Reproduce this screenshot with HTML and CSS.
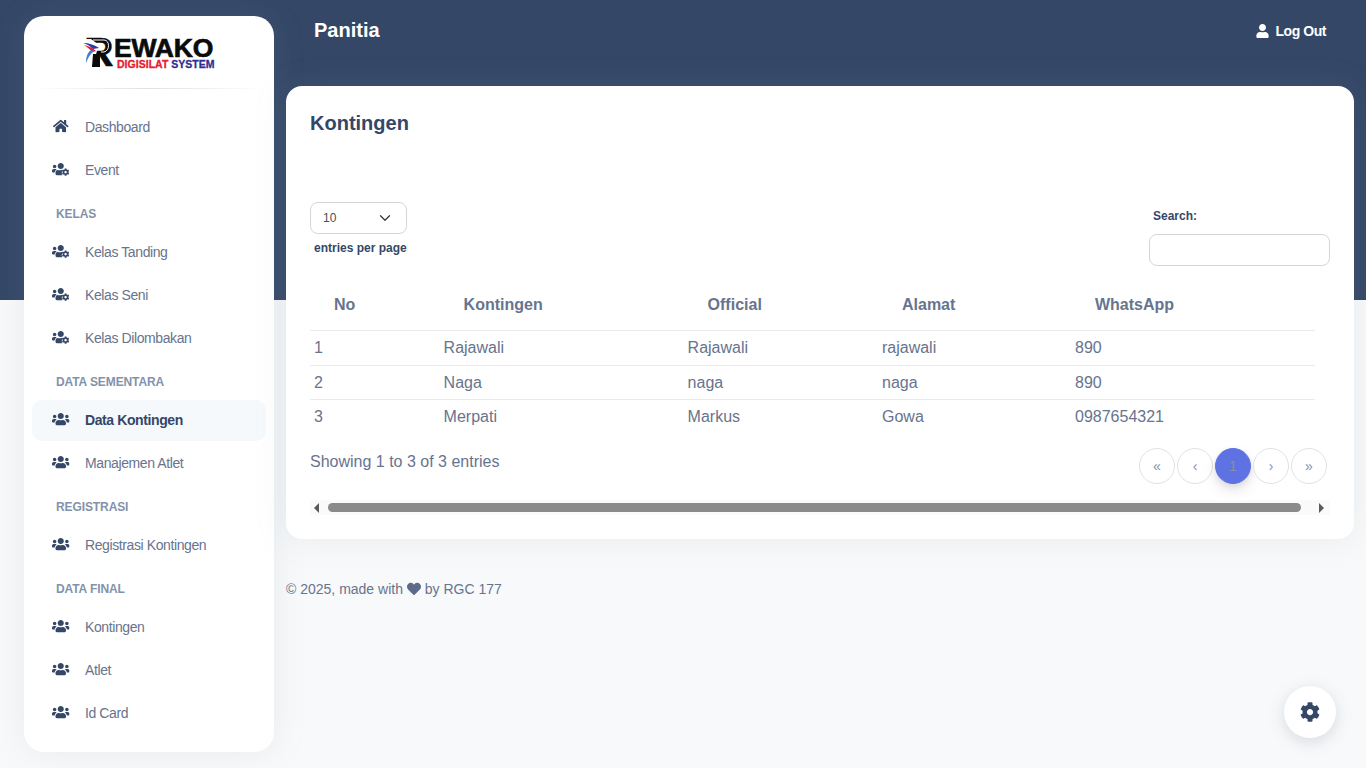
FILE: index.html
```html
<!DOCTYPE html>
<html lang="id">
<head>
<meta charset="utf-8">
<title>Kontingen</title>
<link rel="stylesheet" href="styles.css">
</head>
<body>
<svg class="defs" aria-hidden="true">
  <symbol id="i-users" viewBox="0 0 640 512"><path d="M96 224c35.300 0 64-28.700 64-64s-28.700-64-64-64-64 28.700-64 64 28.700 64 64 64zm448 0c35.300 0 64-28.700 64-64s-28.700-64-64-64-64 28.700-64 64 28.700 64 64 64zm32 32h-64c-17.600 0-33.500 7.100-45.100 18.600 40.300 22.100 68.900 62 75.100 109.400h66c17.700 0 32-14.300 32-32v-32c0-35.300-28.700-64-64-64zm-256 0c61.900 0 112-50.100 112-112S381.900 32 320 32 208 82.100 208 144s50.100 112 112 112zm76.800 32h-8.300c-20.800 10-43.900 16-68.500 16s-47.600-6-68.500-16h-8.300C179.600 288 128 339.600 128 403.200V432c0 26.500 21.500 48 48 48h288c26.500 0 48-21.500 48-48v-28.800c0-63.600-51.600-115.200-115.200-115.200zm-223.700-13.400C161.500 263.100 145.600 256 128 256H64c-35.300 0-64 28.700-64 64v32c0 17.700 14.300 32 32 32h65.900c6.300-47.400 34.900-87.300 75.200-109.400z"/></symbol>
  <symbol id="i-cog" viewBox="0 0 512 512"><path d="M487.400 315.700l-42.600-24.600c4.300-23.200 4.300-47 0-70.200l42.600-24.600c4.900-2.800 7.100-8.600 5.500-14-11.100-35.600-30-67.800-54.700-94.600-3.800-4.100-10-5.100-14.800-2.300L380.800 110c-17.900-15.400-38.500-27.300-60.800-35.100V25.800c0-5.600-3.900-10.500-9.400-11.700-36.700-8.200-74.300-7.800-109.200 0-5.500 1.200-9.400 6.100-9.400 11.700V75c-22.200 7.900-42.800 19.800-60.800 35.100L88.700 85.500c-4.900-2.800-11-1.900-14.800 2.300-24.700 26.700-43.600 58.900-54.700 94.600-1.700 5.400.6 11.200 5.500 14L67.300 221c-4.300 23.200-4.300 47 0 70.200l-42.600 24.600c-4.900 2.800-7.100 8.600-5.500 14 11.100 35.600 30 67.800 54.700 94.600 3.800 4.100 10 5.100 14.800 2.300l42.600-24.600c17.900 15.400 38.500 27.300 60.800 35.100v49.200c0 5.600 3.900 10.500 9.400 11.700 36.700 8.200 74.300 7.800 109.200 0 5.500-1.200 9.400-6.100 9.400-11.700v-49.200c22.200-7.900 42.800-19.800 60.800-35.100l42.600 24.600c4.900 2.800 11 1.900 14.800-2.300 24.700-26.700 43.600-58.900 54.700-94.600 1.500-5.500-.7-11.300-5.600-14.100zM256 336c-44.100 0-80-35.900-80-80s35.900-80 80-80 80 35.900 80 80-35.900 80-80 80z"/></symbol>
  <symbol id="i-users-cog" viewBox="0 0 640 512"><path d="M96 224c35.300 0 64-28.700 64-64s-28.700-64-64-64-64 28.700-64 64 28.700 64 64 64zm224 32c61.900 0 112-50.100 112-112S381.900 32 320 32 208 82.100 208 144s50.100 112 112 112zm-147 18.600C161.500 263.100 145.600 256 128 256H64c-35.300 0-64 28.700-64 64v32c0 17.700 14.300 32 32 32h65.900c6.300-47.400 34.900-87.300 75.200-109.400zM128 403.200V432c0 26.500 21.500 48 48 48h196c-12-18-20-50-14-92 4-30 18-58 44-84-10-10-24-16-40-16h-8c-22 10-44 16-67 16s-48-6-68-16h-8c-64 0-83 52-83 115.200z"/><path transform="translate(356 230) scale(.55)" d="M487.400 315.700l-42.600-24.600c4.300-23.200 4.300-47 0-70.200l42.600-24.600c4.900-2.800 7.100-8.600 5.500-14-11.100-35.600-30-67.800-54.700-94.600-3.800-4.100-10-5.100-14.800-2.300L380.800 110c-17.900-15.400-38.500-27.300-60.800-35.100V25.800c0-5.600-3.900-10.500-9.400-11.700-36.700-8.200-74.300-7.800-109.200 0-5.500 1.200-9.400 6.100-9.400 11.700V75c-22.200 7.900-42.800 19.800-60.800 35.100L88.700 85.500c-4.900-2.800-11-1.900-14.800 2.300-24.700 26.700-43.600 58.900-54.700 94.600-1.700 5.400.6 11.200 5.500 14L67.300 221c-4.300 23.200-4.300 47 0 70.200l-42.600 24.600c-4.900 2.800-7.100 8.600-5.500 14 11.100 35.600 30 67.800 54.700 94.600 3.800 4.100 10 5.100 14.800 2.300l42.600-24.600c17.900 15.400 38.500 27.300 60.800 35.100v49.200c0 5.600 3.900 10.500 9.400 11.700 36.700 8.200 74.300 7.800 109.200 0 5.500-1.200 9.400-6.100 9.400-11.700v-49.200c22.200-7.900 42.800-19.800 60.800-35.100l42.600 24.600c4.900 2.800 11 1.900 14.800-2.300 24.700-26.700 43.600-58.900 54.700-94.600 1.500-5.500-.7-11.300-5.600-14.100zM256 336c-44.100 0-80-35.900-80-80s35.900-80 80-80 80 35.900 80 80-35.900 80-80 80z"/></symbol>
</svg>

<aside class="sidebar">
  <div class="brand">
    <div class="logo">
      <div class="logo-mark">
        <span class="logo-r">R</span>
        <svg class="logo-swoosh" viewBox="0 0 32 30" aria-hidden="true">
          <path d="M0 2 H8 L16 8 L14 14 L9 30 H2 Z" fill="#fff"/>
          <path d="M0 6 C6 6 12 8 16 11 L10 12 C7 9 4 7 0 6 Z" fill="#2b3a9c"/>
          <path d="M1 8 C6 9 10 11 13 14 L9 15 C7 12 4 10 1 8 Z" fill="#e8202e"/>
          <path d="M8 13 L11 14 C7 17 5 21 3 26 C3 21 4 16 8 13 Z" fill="#3f7fd0"/>
          <path d="M10 17 H17 V30 H9 Z" fill="#0b0b0b"/>
          <path d="M10 3 H21 C27 3 27 14 21 15 H18" fill="none" stroke="#fff" stroke-width="1"/>
        </svg>
      </div>
      <div class="logo-text">
        <div class="logo-name">EWAKO</div>
        <div class="logo-sub"><span class="red">DIGISILAT</span> <span class="blue">SYSTEM</span></div>
      </div>
    </div>
  </div>
  <hr class="divider">
  <nav class="nav">
    <a class="item"><svg class="ico home" viewBox="0 0 576 512"><path d="M280.370 148.260L96 300.110V464a16 16 0 0 0 16 16l112.060-.29a16 16 0 0 0 15.920-16V368a16 16 0 0 1 16-16h64a16 16 0 0 1 16 16v95.640a16 16 0 0 0 16 16.050L464 480a16 16 0 0 0 16-16V300L295.670 148.260a12.190 12.190 0 0 0-15.300 0zM571.600 251.470L488 182.560V44.050a12 12 0 0 0-12-12h-56a12 12 0 0 0-12 12v72.610L318.470 43a48 48 0 0 0-61 0L4.340 251.470a12 12 0 0 0-1.600 16.900l25.500 31A12 12 0 0 0 45.150 301l235.220-193.740a12.190 12.190 0 0 1 15.300 0L530.900 301a12 12 0 0 0 16.900-1.600l25.500-31a12 12 0 0 0-1.700-16.930z"/></svg><span>Dashboard</span></a>
    <a class="item"><svg class="ico"><use href="#i-users-cog"/></svg><span>Event</span></a>
    <div class="section">KELAS</div>
    <a class="item"><svg class="ico"><use href="#i-users-cog"/></svg><span>Kelas Tanding</span></a>
    <a class="item"><svg class="ico"><use href="#i-users-cog"/></svg><span>Kelas Seni</span></a>
    <a class="item"><svg class="ico"><use href="#i-users-cog"/></svg><span>Kelas Dilombakan</span></a>
    <div class="section">DATA SEMENTARA</div>
    <a class="item active"><svg class="ico"><use href="#i-users"/></svg><span>Data Kontingen</span></a>
    <a class="item"><svg class="ico"><use href="#i-users"/></svg><span>Manajemen Atlet</span></a>
    <div class="section">REGISTRASI</div>
    <a class="item"><svg class="ico"><use href="#i-users"/></svg><span>Registrasi Kontingen</span></a>
    <div class="section">DATA FINAL</div>
    <a class="item"><svg class="ico"><use href="#i-users"/></svg><span>Kontingen</span></a>
    <a class="item"><svg class="ico"><use href="#i-users"/></svg><span>Atlet</span></a>
    <a class="item"><svg class="ico"><use href="#i-users"/></svg><span>Id Card</span></a>
  </nav>
</aside>

<main class="main">
  <header class="topbar">
    <h1 class="page-title">Panitia</h1>
    <a class="logout"><svg class="user-ico" viewBox="0 0 448 512"><path d="M224 256c70.700 0 128-57.300 128-128S294.700 0 224 0 96 57.300 96 128s57.300 128 128 128zm89.600 32h-16.700c-22.200 10.200-46.900 16-72.900 16s-50.600-5.800-72.900-16h-16.700C60.200 288 0 348.200 0 422.400V464c0 26.500 21.500 48 48 48h352c26.500 0 48-21.500 48-48v-41.600c0-74.200-60.200-134.400-134.400-134.400z"/></svg>Log Out</a>
  </header>

  <section class="card">
    <h2 class="card-title">Kontingen</h2>
    <div class="controls">
      <div class="per-page">
        <div class="select"><span>10</span>
          <svg class="chev" viewBox="0 0 16 16"><path d="M2 5l6 6 6-6" fill="none" stroke="#343a40" stroke-width="2" stroke-linecap="round" stroke-linejoin="round"/></svg>
        </div>
        <div class="per-label">entries per page</div>
      </div>
      <div class="search">
        <label class="search-label" for="q">Search:</label>
        <input class="search-input" id="q" type="text">
      </div>
    </div>

    <table class="table">
      <thead>
        <tr><th class="c1">No</th><th class="c2">Kontingen</th><th class="c3">Official</th><th class="c4">Alamat</th><th class="c5">WhatsApp</th></tr>
      </thead>
      <tbody>
        <tr class="tall"><td>1</td><td>Rajawali</td><td>Rajawali</td><td>rajawali</td><td>890</td></tr>
        <tr><td>2</td><td>Naga</td><td>naga</td><td>naga</td><td>890</td></tr>
        <tr><td>3</td><td>Merpati</td><td>Markus</td><td>Gowa</td><td>0987654321</td></tr>
      </tbody>
    </table>

    <div class="table-foot">
      <div class="showing">Showing 1 to 3 of 3 entries</div>
      <div class="pager">
        <a class="pg">«</a><a class="pg">‹</a><a class="pg current">1</a><a class="pg">›</a><a class="pg">»</a>
      </div>
    </div>

    <div class="scrollbar">
      <span class="arrow left"></span>
      <span class="thumb"></span>
      <span class="arrow right"></span>
    </div>
  </section>

  <footer class="footer">© 2025, made with <svg class="heart" viewBox="0 0 512 512"><path d="M462.300 62.600C407.500 15.900 326 24.300 275.700 76.200L256 96.500l-19.700-20.300C186.100 24.300 104.500 15.900 49.700 62.600c-62.800 53.600-66.100 149.800-9.900 207.900l193.500 199.800c12.500 12.900 32.800 12.900 45.300 0l193.500-199.800c56.300-58.100 53-154.300-9.800-207.900z"/></svg> by RGC 177</footer>
</main>

<a class="fab"><svg class="fab-ico"><use href="#i-cog"/></svg></a>
</body>
</html>
```
FILE: styles.css
```css
* { box-sizing: border-box; }
html, body { height: 100%; }
body {
  margin: 0;
  height: 768px;
  overflow: hidden;
  display: flex;
  align-items: flex-start;
  font-family: "Liberation Sans", Arial, sans-serif;
  color: #67748e;
  background: linear-gradient(to bottom, #344767 0, #344767 300px, #f8f9fa 300px);
}
.defs { display: none; }

/* Sidebar */
.sidebar {
  flex: 0 0 250px;
  height: 736px;
  margin: 16px 0 16px 24px;
  background: #fff;
  border-radius: 20px;
  box-shadow: 0 0 32px rgba(136, 152, 170, .15);
  padding: 0 8px;
}
.brand { height: 72px; display: flex; justify-content: center; padding-top: 21px; }
.logo { display: flex; width: 130px; height: 34px; align-items: flex-start; }
.logo-mark { position: relative; width: 30px; height: 34px; flex: none; }
.logo-r {
  display: block;
  font: bold 41px/31px "Liberation Sans", sans-serif;
  color: #0b0b0b;
  -webkit-text-stroke: .5px #0b0b0b;
}
.logo-swoosh { position: absolute; left: -1px; top: 0; width: 32px; height: 30px; }
.logo-name {
  font: bold 26.500px/22px "Liberation Sans", sans-serif;
  color: #0b0b0b;
  -webkit-text-stroke: .7px #0b0b0b;
  white-space: nowrap;
  letter-spacing: -.2px;
}
.logo-sub { padding-left: 3px; font: bold 10.500px/10px "Liberation Sans", sans-serif; white-space: nowrap; letter-spacing: .02px; -webkit-text-stroke: .3px; }
.red { color: #e8202e; }
.blue { color: #2f2f91; }
.divider {
  margin: 0;
  height: 1px;
  border: 0;
  background: linear-gradient(to right, rgba(0,0,0,0), rgba(0,0,0,.12), rgba(0,0,0,0));
}
.nav { display: flex; flex-direction: column; gap: 2px; padding-top: 18px; }
.item {
  display: flex;
  align-items: center;
  height: 41px;
  padding: 0 0 2px 20px;
  border-radius: 10px;
  font-size: 14px;
  letter-spacing: -.4px;
  color: #67748e;
}
.item.active { background: #f6f9fc; color: #344767; font-weight: bold; }
.ico { width: 17.500px; height: 14px; fill: #344767; flex: none; margin-right: 15.500px; margin-top: -2px; }
.section {
  height: 38px;
  display: flex;
  align-items: flex-end;
  padding: 0 0 9px 24px;
  margin-top: -1px;
  font-size: 12px;
  font-weight: bold;
  color: #8392ab;
  letter-spacing: -.1px;
}

/* Main */
.main { width: 1068px; margin-left: 12px; flex: none; }
.topbar {
  height: 86px;
  display: flex;
  justify-content: space-between;
  align-items: flex-start;
  padding: 19px 28px 0;
}
.page-title { margin: 0; font-size: 20px; line-height: 23px; font-weight: bold; color: #fff; }
.logout {
  display: flex;
  align-items: center;
  margin-top: 4px;
  font-size: 14px;
  font-weight: bold;
  letter-spacing: -.45px;
  line-height: 16px;
  color: #fff;
}
.user-ico { width: 13px; height: 14px; fill: #fff; margin-right: 7px; margin-top: -1px; }

.card {
  height: 453px;
  background: #fff;
  border-radius: 16px;
  box-shadow: 0 0 32px rgba(136, 152, 170, .15);
  padding: 26px 24px 0;
}
.card-title { margin: 0; font-size: 20px; line-height: 23px; font-weight: bold; color: #344767; }
.controls {
  display: flex;
  justify-content: space-between;
  align-items: flex-start;
  margin-top: 67px;
  height: 77px;
}
.per-page { width: 110px; }
.select {
  width: 97px;
  height: 32px;
  border: 1px solid #d2d6da;
  border-radius: 8px;
  display: flex;
  align-items: center;
  justify-content: space-between;
  padding: 0 15px 0 12px;
  font-size: 12px;
  color: #495057;
}
.chev { width: 12px; height: 12px; }
.chev path { stroke-width: 1.700px; }
.per-label { margin: 7px 0 0 4px; font-size: 12px; line-height: 14px; font-weight: bold; color: #344767; white-space: nowrap; }
.search { width: 181px; }
.search-label { display: block; height: 32px; padding: 7px 0 0 4px; font-size: 12px; line-height: 14px; font-weight: bold; color: #344767; }
.search-input { display: block; width: 181px; height: 32px; border: 1px solid #d2d6da; border-radius: 8px; background: #fff; outline: 0; }

.table { width: 1005px; border-collapse: collapse; table-layout: fixed; font-size: 16px; }
.c1 { width: 129.600px; }
.c2 { width: 244px; }
.c3 { width: 194.400px; }
.c4 { width: 193px; }
.c5 { width: 244px; }
.table th {
  height: 51px;
  padding: 2px 0 0 24px;
  text-align: left;
  font-weight: bold;
  color: #67748e;
  border-bottom: 1px solid #e9ecef;
}
.table td {
  height: 34px;
  padding: 1px 4px 0;
  color: #67748e;
  border-bottom: 1px solid #e9ecef;
}
.table .tall td { height: 35px; padding-top: 0; }
.table tr:last-child td { border-bottom: 0; }
.table-foot { display: flex; justify-content: space-between; align-items: flex-start; padding-top: 15px; height: 68px; }
.showing { line-height: 18px; padding-top: 5px; }
.pager { display: flex; gap: 2px; margin-right: 3px; }
.pg {
  width: 36px;
  height: 36px;
  border-radius: 50%;
  border: 1px solid #dee2e6;
  display: flex;
  align-items: center;
  justify-content: center;
  font-size: 14px;
  color: #8392ab;
  background: #fff;
}
.pg.current {
  background: #5e72e4;
  border-color: #5e72e4;
  color: #8a8fa3;
  box-shadow: 0 7px 14px rgba(50, 50, 93, .1), 0 3px 6px rgba(0, 0, 0, .08);
}
.scrollbar { display: flex; align-items: center; height: 15px; background: #fafafa; margin-top: -1px; }
.thumb { flex: none; width: 973px; height: 9px; margin: 0 13px 0 0; background: #8a8a8a; border-radius: 5px; }
.arrow { flex: none; width: 0; height: 0; border-top: 5px solid transparent; border-bottom: 5px solid transparent; }
.arrow.left { border-right: 5px solid #5a5a5a; margin: 0 9px 0 4px; }
.arrow.right { border-left: 5px solid #5a5a5a; margin-left: 5px; }

.footer { margin-top: 41px; font-size: 14px; line-height: 18px; color: #67748e; }
.heart { width: 14px; height: 14px; fill: #5c6b89; vertical-align: -2px; }

.fab {
  position: fixed;
  left: 1284px;
  top: 686px;
  width: 52px;
  height: 52px;
  border-radius: 50%;
  background: #fff;
  display: flex;
  align-items: center;
  justify-content: center;
  box-shadow: 0 4px 16px rgba(136, 152, 170, .3);
}
.fab-ico { width: 20px; height: 20px; fill: #344767; }
```
